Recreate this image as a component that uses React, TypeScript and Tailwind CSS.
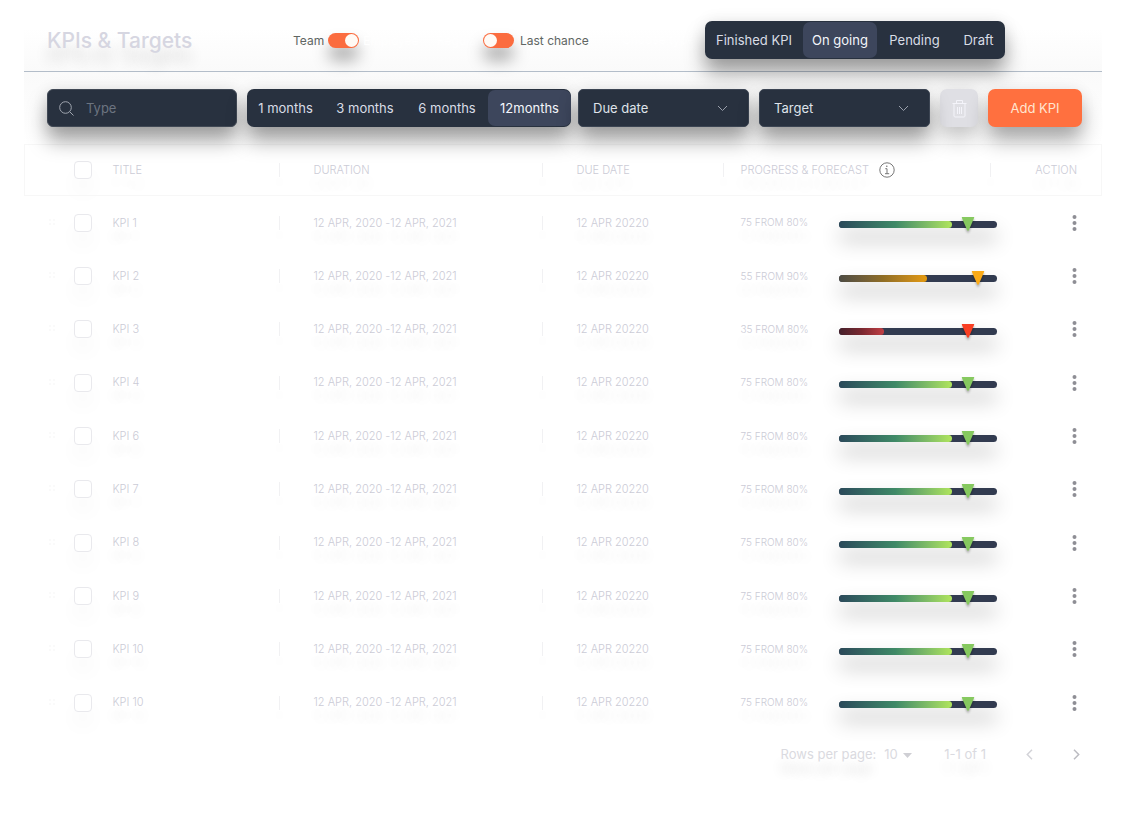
import { useState } from "react";

const statuses = [
  { name: "Finished KPI", width: "w-[98px]" },
  { name: "On going", width: "w-[74px]" },
  { name: "Pending", width: "w-[75px]" },
  { name: "Draft", width: "w-[53px]" },
];

const periods = [
  { name: "1 months", width: "w-[77px]" },
  { name: "3 months", width: "w-[82px]" },
  { name: "6 months", width: "w-[82px]" },
  { name: "12months", width: "w-[83px]" },
];

const green = { fill: "from-[#2b4a5a] via-[#3f8a67] to-[#b0e55c]", marker: "#86c95f" };
const amber = { fill: "from-[#4d4b42] via-[#8f6d24] to-[#e59a0c]", marker: "#fbab18" };
const red = { fill: "from-[#45202b] via-[#79272f] to-[#c23f44]", marker: "#f93f23" };

const rows = [
  { title: "KPI 1", value: 75, bar: 72, target: 80, mark: 82, tone: green },
  { title: "KPI 2", value: 55, bar: 56, target: 90, mark: 88, tone: amber },
  { title: "KPI 3", value: 35, bar: 29, target: 80, mark: 82, tone: red },
  { title: "KPI 4", value: 75, bar: 72, target: 80, mark: 82, tone: green },
  { title: "KPI 6", value: 75, bar: 72, target: 80, mark: 82, tone: green },
  { title: "KPI 7", value: 75, bar: 72, target: 80, mark: 82, tone: green },
  { title: "KPI 8", value: 75, bar: 72, target: 80, mark: 82, tone: green },
  { title: "KPI 9", value: 75, bar: 72, target: 80, mark: 82, tone: green },
  { title: "KPI 10", value: 75, bar: 72, target: 80, mark: 82, tone: green },
  { title: "KPI 10", value: 75, bar: 72, target: 80, mark: 82, tone: green },
];

const Segments = ({ items, initial }) => {
  const [active, setActive] = useState(initial);
  return (
    <div className="flex h-[38px] shrink-0 rounded-[7px] bg-[#28313f] py-px shadow-[0_14px_20px_rgba(0,0,0,0.36),0_0_16px_rgba(0,0,0,0.08)]">
      {items.map((item) => (
        <button
          key={item.name}
          onClick={() => setActive(item.name)}
          className={`${item.width} rounded-[7px] pt-px text-[13px] whitespace-nowrap ${
            active === item.name ? "bg-[#3d465c] text-[#f4f6fb]" : "text-[#d9dde6]"
          }`}
        >
          {item.name}
        </button>
      ))}
    </div>
  );
};

const Toggle = ({ id, on }) => (
  <input
    id={id}
    type="checkbox"
    role="switch"
    defaultChecked={on}
    className="h-[15px] w-[31px] shrink-0 appearance-none rounded-full bg-[#fb6c3f] p-px shadow-[0_12px_16px_rgba(0,0,0,0.34)] before:block before:size-[13px] before:rounded-full before:bg-[#fffaf5] checked:before:ml-4"
  />
);

const Dropdown = ({ label }) => (
  <div className="relative w-[171px] shrink-0">
    <select
      aria-label={label}
      className="h-[38px] w-full appearance-none rounded-[5px] border border-[#3c4553] bg-[#28313f] pt-px pl-3.5 text-[13px] text-[#dfe3ea] shadow-[0_14px_20px_rgba(0,0,0,0.36),0_0_16px_rgba(0,0,0,0.08)]"
    >
      <option>{label}</option>
    </select>
    <svg className="pointer-events-none absolute top-4 right-[21px]" width="11" height="7" viewBox="0 0 11 7" fill="none" stroke="#9aa0ac">
      <path d="M1 1l4.500 4.500L10 1" />
    </svg>
  </div>
);

const Divider = () => <span className="h-3.5 w-px bg-[#f1f1f3] shadow-[0_12px_12px_rgba(0,0,0,0.08)]" />;

const Check = ({ label }) => (
  <input
    type="checkbox"
    aria-label={label}
    className="block size-[18px] appearance-none rounded-[4px] border border-[#e9e9ed] shadow-[0_14px_20px_rgba(0,0,0,0.03)]"
  />
);

const Progress = ({ row }) => (
  <div className="relative mt-1 h-[7px] w-[158px] rounded-full bg-[#323b50] shadow-[0_12px_20px_rgba(0,0,0,0.3)]">
    <div className={`h-full rounded-full bg-linear-to-r ${row.tone.fill}`} style={{ width: `${row.bar}%` }} />
    <svg
      className="absolute -top-1 -translate-x-1/2 drop-shadow-[0_2px_1px_rgba(0,0,0,0.3)]"
      style={{ left: `${row.mark}%` }}
      width="13"
      height="14"
      viewBox="0 0 13 14"
    >
      <path d="M0 0h13L7.300 13.300a.9.9 0 0 1-1.600 0z" fill={row.tone.marker} />
    </svg>
  </div>
);

const App = () => {
  return (
    <main className="min-h-screen bg-white px-6 font-['Inter',sans-serif]">
      <header className="flex items-center border-b border-[#b3bdc9] bg-linear-to-b from-white from-40% to-[#fafafa] pt-[21px] pr-[97px] pb-3 pl-[23px]">
        <h1 className="w-[246px] shrink-0 pt-px text-[21px] font-medium text-[#d6d6e1] text-shadow-[0_14px_14px_rgba(0,0,0,0.16)]">KPIs &amp; Targets</h1>
        <div className="flex w-36 shrink-0 items-center gap-1 pt-px text-[12px] text-[#606663]">
          <label htmlFor="team">Team</label>
          <Toggle id="team" on={true} />
          <span className="text-white">Employee</span>
        </div>
        <div className="flex w-[185px] shrink-0 items-center gap-1.5 pt-px text-[12px] text-[#606663]">
          <span className="w-10 text-white">Regular</span>
          <Toggle id="last-chance" on={false} />
          <label htmlFor="last-chance" className="whitespace-nowrap">Last chance</label>
        </div>
        <span className="text-[12px] whitespace-nowrap text-white">Choose type</span>
        <div className="ml-auto">
          <Segments items={statuses} initial="On going" />
        </div>
      </header>

      <section className="flex items-center bg-linear-to-b from-[#fafafa] to-white pt-[17px] pr-5 pb-[17px] pl-[23px]">
        <label className="mr-2.5 flex h-[38px] min-w-0 flex-1 items-center gap-3 rounded-[6px] border border-[#414955] bg-[#28313f] px-[11px] shadow-[0_14px_20px_rgba(0,0,0,0.36),0_0_16px_rgba(0,0,0,0.08)]">
          <svg className="shrink-0" width="15" height="15" viewBox="0 0 15 15" fill="none" stroke="#a0a6b0">
            <circle cx="6.500" cy="6.500" r="5.800" />
            <path d="M10.700 10.700l3.800 3.800" />
          </svg>
          <input aria-label="Type" placeholder="Type" className="w-full min-w-0 pt-px text-[13px] text-white placeholder:text-[#6c7480] focus:outline-none" />
        </label>
        <Segments items={periods} initial="12months" />
        <div className="ml-[7px] flex gap-2.5">
          <Dropdown label="Due date" />
          <Dropdown label="Target" />
          <button aria-label="Delete" className="flex size-[38px] items-center justify-center rounded-[7px] bg-[#dfdfe4] shadow-[0_14px_20px_rgba(0,0,0,0.18),0_0_16px_rgba(0,0,0,0.08)]">
            <svg width="15" height="19" viewBox="0 0 15 19" fill="none" stroke="#f4f4fa">
              <path d="M.5 4.500h14M4.500 4.500v-3h6v3M2 4.500v12.500c0 .6.400 1 1 1h9c.6 0 1-.4 1-1V4.500M5.500 8v7M7.500 8v7M9.500 8v7" />
            </svg>
          </button>
          <button className="h-[38px] w-[94px] rounded-[7px] bg-[#ff703f] pt-px text-[13px] text-[#ffe5d0] shadow-[0_14px_20px_rgba(0,0,0,0.32),0_0_16px_rgba(0,0,0,0.06)]">Add KPI</button>
        </div>
      </section>

      <table className="w-full table-fixed text-left text-[11px] font-light text-[#cbcbd6]">
        <colgroup>
          <col className="w-[88px]" />
          <col />
          <col className="w-[263px]" />
          <col className="w-[181px]" />
          <col className="w-[273px]" />
          <col className="w-[105px]" />
        </colgroup>
        <thead>
          <tr className="h-[51px] border border-[#f7f7f7] text-shadow-[0_14px_12px_rgba(0,0,0,0.1)] *:font-light">
            <th className="pl-[49px]">
              <Check label="Select all" />
            </th>
            <th>
              <div className="flex items-center justify-between">TITLE<Divider /></div>
            </th>
            <th className="pl-[34px]">
              <div className="flex items-center justify-between">DURATION<Divider /></div>
            </th>
            <th className="pl-[34px]">
              <div className="flex items-center justify-between">DUE DATE<Divider /></div>
            </th>
            <th className="pr-1.5 pl-[17px]">
              <div className="flex items-center gap-2.5">
                PROGRESS &amp; FORECAST
                <svg width="16" height="16" viewBox="0 0 16 16" fill="none" stroke="#777777">
                  <circle cx="8" cy="8" r="7.200" />
                  <path d="M6.300 6.700H8v5M6 11.700h4.200" />
                  <circle cx="7.800" cy="4.300" r=".8" fill="#777777" stroke="none" />
                </svg>
                <span className="ml-auto flex"><Divider /></span>
              </div>
            </th>
            <th className="pr-6 text-right">ACTION</th>
          </tr>
        </thead>
        <tbody>
          {rows.map((row, i) => (
            <tr key={i} className="h-[53px] text-shadow-[0_14px_12px_rgba(0,0,0,0.14)] nth-[3n+1]:h-[54px]">
              <td className="pl-[23px]">
                <div className="flex items-center gap-[18px]">
                  <svg width="8" height="10" viewBox="0 0 8 10" fill="#f8f8f8">
                    <circle cx="2" cy="2" r="1" />
                    <circle cx="6" cy="2" r="1" />
                    <circle cx="2" cy="6" r="1" />
                    <circle cx="6" cy="6" r="1" />
                  </svg>
                  <Check label={row.title} />
                </div>
              </td>
              <td>
                <div className="flex items-center justify-between">{row.title}<Divider /></div>
              </td>
              <td className="pl-[34px]">
                <div className="flex items-center justify-between">12 APR, 2020 -12 APR, 2021<Divider /></div>
              </td>
              <td className="pl-[34px]">12 APR 20220</td>
              <td className="pl-[17px]">
                <div className="flex items-center justify-between whitespace-nowrap">
                  <span className="text-[10px]">{row.value} FROM {row.target}%</span>
                  <Progress row={row} />
                </div>
              </td>
              <td className="pr-6">
                <button aria-label={`Actions for ${row.title}`} className="ml-auto block">
                  <svg width="7" height="18" viewBox="0 0 7 18" fill="#8e8e95">
                    <circle cx="3.500" cy="3" r="2" />
                    <circle cx="3.500" cy="9" r="2" />
                    <circle cx="3.500" cy="15" r="2" />
                  </svg>
                </button>
              </td>
            </tr>
          ))}
        </tbody>
      </table>

      <footer className="flex h-[50px] items-center justify-end pr-[22px] text-[13px] text-[#dadae0] text-shadow-[0_14px_12px_rgba(0,0,0,0.16)]">
        <label htmlFor="per-page" className="mr-2">Rows per page:</label>
        <div className="relative mr-8">
          <select id="per-page" className="w-7 appearance-none">
            <option>10</option>
          </select>
          <svg className="pointer-events-none absolute top-2 right-0" width="9" height="5" viewBox="0 0 9 5" fill="#cfcfd4">
            <path d="M0 0h9L4.500 5z" />
          </svg>
        </div>
        <span className="mr-10">1-1 of 1</span>
        <button aria-label="Previous page" className="mr-10">
          <svg width="7" height="11" viewBox="0 0 7 11" fill="none" stroke="#d3d3d8" strokeWidth="1.500">
            <path d="M6 .8L1.300 5.500 6 10.200" />
          </svg>
        </button>
        <button aria-label="Next page">
          <svg width="7" height="11" viewBox="0 0 7 11" fill="none" stroke="#bcbcc2" strokeWidth="1.500">
            <path d="M1 .8l4.700 4.700L1 10.200" />
          </svg>
        </button>
      </footer>
    </main>
  );
};

export default App;
